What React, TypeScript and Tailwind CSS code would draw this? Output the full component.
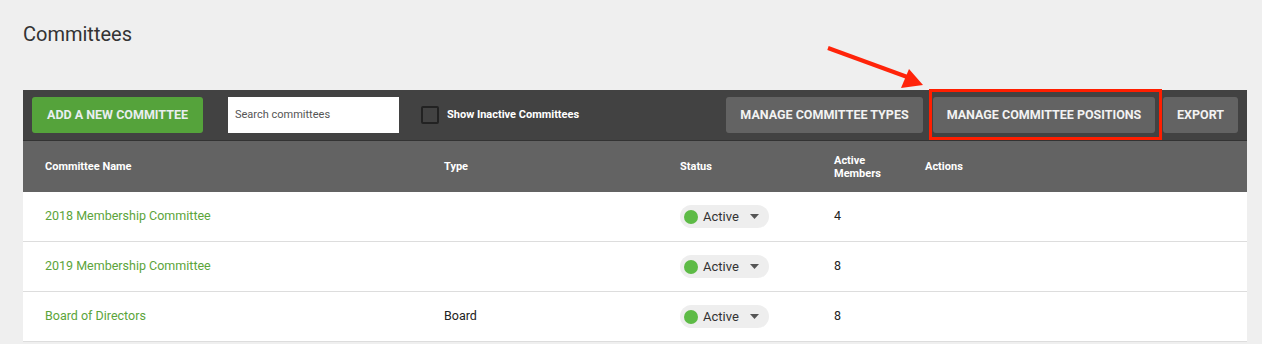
const rows = [
  { name: "2018 Membership Committee", type: "", members: "4" },
  { name: "2019 Membership Committee", type: "", members: "8" },
  { name: "Board of Directors", type: "Board", members: "8" },
];

const StatusPill = () => (
  <div className="flex h-[23px] w-[89px] items-center rounded-full bg-[#eeeeee] pl-[4px] pr-[10px]">
    <span className="h-[14px] w-[14px] rounded-full bg-[#5dbb46]" />
    <span className="ml-[5px] text-[13px] text-[#333]">Active</span>
    <svg className="ml-auto" width="9" height="5" viewBox="0 0 9 5">
      <path d="M0 0h9L4.5 5z" fill="#555" />
    </svg>
  </div>
);

const App = () => {
  return (
    <div className="relative h-[344px] w-[1262px] overflow-hidden bg-[#efefef] pl-[23px] pr-[15px] font-['Roboto',sans-serif]">
      <h1 className="pt-[22px] text-[20px] leading-[24px] text-[#333]">Committees</h1>

      {/* annotation arrow */}
      <svg className="absolute left-[820px] top-[40px]" width="115" height="52" viewBox="0 0 115 52">
        <line x1="8" y1="8" x2="90" y2="38" stroke="#ff240a" strokeWidth="4" />
        <path d="M103 45L81 48L89 29z" fill="#ff240a" />
      </svg>

      <div className="mt-[44px]">
        <div className="flex h-[50px] items-center bg-[#424242] px-[9px]">
          <button className="h-[36px] w-[171px] rounded-[3px] bg-[#55a33b] text-[12.5px] font-bold text-[#e8eef0]">
            ADD A NEW COMMITTEE
          </button>
          <div className="ml-[25px] flex h-[36px] w-[171px] items-center bg-white px-[7px] text-[11px] text-[#555]">
            Search committees
          </div>
          <div className="ml-[22px] h-[18px] w-[18px] rounded-[2px] border-2 border-[#222]" />
          <span className="ml-[8px] text-[11px] font-bold text-white">Show Inactive Committees</span>

          <div className="ml-auto flex items-center">
            <button className="h-[36px] w-[197px] rounded-[3px] bg-[#636363] text-[12.5px] font-bold text-[#f2f2f2]">
              MANAGE COMMITTEE TYPES
            </button>
            <div className="relative ml-[10px]">
              <button className="h-[36px] w-[222px] rounded-[3px] bg-[#636363] text-[12.5px] font-bold text-[#f2f2f2]">
                MANAGE COMMITTEE POSITIONS
              </button>
              <div className="absolute -bottom-[7px] -left-[4px] -right-[7px] -top-[8px] border-[3px] border-[#ff1e00]" />
            </div>
            <button className="ml-[8px] h-[36px] w-[75px] rounded-[3px] bg-[#636363] text-[12.5px] font-bold text-[#f2f2f2]">
              EXPORT
            </button>
          </div>
        </div>

        <div className="grid h-[52px] grid-cols-[399px_236px_154px_91px_1fr] items-center border-t border-[#333] bg-[#636363] pl-[22px] text-[11px] font-bold leading-[13px] text-white">
          <span>Committee Name</span>
          <span>Type</span>
          <span>Status</span>
          <span>
            Active
            <br />
            Members
          </span>
          <span>Actions</span>
        </div>

        {rows.map((row) => (
          <div
            key={row.name}
            className="grid h-[50px] grid-cols-[399px_236px_154px_91px_1fr] items-center border-b border-[#dddddd] bg-white pl-[22px] text-[12.5px]"
          >
            <span className="text-[#5ba43a]">{row.name}</span>
            <span className="text-[#222]">{row.type}</span>
            <StatusPill />
            <span className="text-[#222]">{row.members}</span>
            <span />
          </div>
        ))}
      </div>
    </div>
  );
};

export default App;
